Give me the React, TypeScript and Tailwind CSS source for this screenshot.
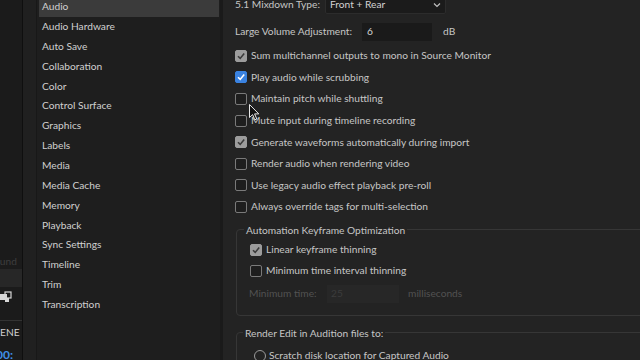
import React from "react";

const sidebarItems = [
  "Audio",
  "Audio Hardware",
  "Auto Save",
  "Collaboration",
  "Color",
  "Control Surface",
  "Graphics",
  "Labels",
  "Media",
  "Media Cache",
  "Memory",
  "Playback",
  "Sync Settings",
  "Timeline",
  "Trim",
  "Transcription",
];

type CheckState = "off" | "gray" | "blue";

function Check({ state }: { state: CheckState }) {
  if (state === "off") {
    return <div className="w-[12px] h-[12px] shrink-0 rounded-[2px] border border-[#7a7a7a] bg-[#1e1e1e]" />;
  }
  const bg = state === "blue" ? "bg-[#3a82e0] border-[#3a82e0]" : "bg-[#9c9c9c] border-[#9c9c9c]";
  const stroke = state === "blue" ? "#ffffff" : "#3a3a3a";
  return (
    <div className={`w-[12px] h-[12px] shrink-0 rounded-[2px] border flex items-center justify-center ${bg}`}>
      <svg width="10" height="10" viewBox="0 0 10 10">
        <path d="M2 5.2 L4.2 7.4 L8.2 2.6" fill="none" stroke={stroke} strokeWidth="1.6" />
      </svg>
    </div>
  );
}

function CheckRow({ state, label, h }: { state: CheckState; label: string; h: string }) {
  return (
    <div className={`flex items-center gap-[4px] shrink-0 ${h}`}>
      <Check state={state} />
      <span className="whitespace-nowrap">{label}</span>
    </div>
  );
}

export default function App() {
  return (
    <div
      className="w-[640px] h-[360px] overflow-hidden flex bg-[#232323] text-[#c6c6c6] text-[10.2px] relative"
      style={{ fontFamily: "Lato, 'Open Sans', sans-serif" }}
    >
      {/* left app strip */}
      <div className="w-[23px] shrink-0 bg-[#1b1b1b] border-r border-[#0f0f0f] flex flex-col [&>*]:shrink-0">
        <div className="h-[255px]" />
        <div className="h-[14px] flex items-center text-[#3e3e3e] whitespace-nowrap overflow-hidden -ml-[6px]">ound</div>
        <div className="h-[18px] bg-[#272727]" />
        <div className="h-[4px]" />
        <div className="h-[12px] flex items-center">
          <svg width="12" height="12" viewBox="0 0 12 12">
            <rect x="0" y="3" width="7" height="6" fill="#d8d8d8" />
            <rect x="5" y="1" width="6" height="6" fill="none" stroke="#d8d8d8" strokeWidth="1.2" />
            <rect x="5" y="7" width="4" height="4" fill="#d8d8d8" />
          </svg>
        </div>
        <div className="h-[17px]" />
        <div className="h-[1px] bg-[#333]" />
        <div className="h-[4px]" />
        <div className="h-[16px] flex items-center text-[#cfcfcf] whitespace-nowrap overflow-hidden">ENE :</div>
        <div className="h-[7px]" />
        <div className="h-[14px] flex items-center text-[#3f8fe6] text-[12px] font-bold whitespace-nowrap overflow-hidden -ml-[4px]">00:</div>
      </div>
      <div className="w-[14px] shrink-0 bg-[#202020] border-r border-[#181818]" />
      {/* sidebar */}
      <div className="w-[186px] shrink-0 bg-[#1e1e1e] border-r-[3px] border-[#1a1a1a] flex flex-col pl-[2px] pr-[1px]">
        <div className="-mt-[3px] flex flex-col [&>*]:shrink-0">
          {sidebarItems.map((it, i) => (
            <div
              key={it}
              className={`h-[19.85px] flex items-center pl-[3px] text-[10.2px] text-[#d0d0d0] whitespace-nowrap ${i === 0 ? "bg-[#3b3b3b]" : ""}`}
            >
              {it}
            </div>
          ))}
        </div>
      </div>
      {/* content */}
      <div className="flex-1 flex flex-col pl-[12px] relative [&>*]:shrink-0">
        <div className="-mt-[5px] h-[19px] flex items-center">
          <span className="w-[90px] whitespace-nowrap">5.1 Mixdown Type:</span>
          <div className="w-[121px] h-[19px] bg-[#1b1b1b] border border-[#2c2c2c] rounded-[2px] flex items-center justify-between pl-[4px] pr-[4px] text-[#d2d2d2]">
            <span>Front + Rear</span>
            <svg width="8" height="6" viewBox="0 0 8 6">
              <path d="M1 1.5 L4 4.5 L7 1.5" fill="none" stroke="#c0c0c0" strokeWidth="1.2" />
            </svg>
          </div>
        </div>
        <div className="h-[9px]" />
        <div className="h-[18px] flex items-center">
          <span className="w-[127px] whitespace-nowrap">Large Volume Adjustment:</span>
          <div className="w-[70px] h-[18px] bg-[#1a1a1a] flex items-center pl-[5px] text-[#d2d2d2]">6</div>
          <span className="ml-[11px]">dB</span>
        </div>
        <div className="h-[4px]" />
        <div className="flex flex-col">
          <CheckRow h="h-[21.6px]" state="gray" label="Sum multichannel outputs to mono in Source Monitor" />
          <CheckRow h="h-[21.6px]" state="blue" label="Play audio while scrubbing" />
          <CheckRow h="h-[21.6px]" state="off" label="Maintain pitch while shuttling" />
          <CheckRow h="h-[21.6px]" state="off" label="Mute input during timeline recording" />
          <CheckRow h="h-[21.6px]" state="gray" label="Generate waveforms automatically during import" />
          <CheckRow h="h-[21.6px]" state="off" label="Render audio when rendering video" />
          <CheckRow h="h-[21.6px]" state="off" label="Use legacy audio effect playback pre-roll" />
          <CheckRow h="h-[21.6px]" state="off" label="Always override tags for multi-selection" />
        </div>
        <div className="h-[5px]" />
        <fieldset className="border border-[#363636] rounded-[4px] ml-[1px] -mr-[40px] h-[93px] pl-[13px]">
          <legend className="px-[2px] -ml-[6px] leading-[14px] whitespace-nowrap">Automation Keyframe Optimization</legend>
          <CheckRow h="h-[21.6px] mt-[2px]" state="gray" label="Linear keyframe thinning" />
          <CheckRow h="h-[21.6px]" state="off" label="Minimum time interval thinning" />
          <div className="h-[24px] flex items-center text-[#525252] -ml-[1px]">
            <span className="w-[78px] whitespace-nowrap">Minimum time:</span>
            <div className="w-[72px] h-[18px] bg-[#272727] flex items-center pl-[4px] text-[#3c3c3c]">25</div>
            <span className="ml-[9px]">milliseconds</span>
          </div>
        </fieldset>
        <div className="h-[10px]" />
        <fieldset className="border border-[#363636] rounded-[4px] ml-[1px] -mr-[40px] h-[60px] pl-[17px]">
          <legend className="px-[2px] -ml-[11px] leading-[14px] whitespace-nowrap">Render Edit in Audition files to:</legend>
          <div className="h-[24px] mt-[4px] flex items-center gap-[3px]">
            <div className="w-[12px] h-[12px] rounded-full border border-[#9a9a9a]" />
            <span className="whitespace-nowrap">Scratch disk location for Captured Audio</span>
          </div>
        </fieldset>
        {/* mouse cursor */}
        <svg className="absolute left-[26px] top-[104px]" width="11" height="17" viewBox="0 0 11 17">
          <path d="M0.5 0.5 L0.5 13.5 L3.6 10.6 L5.8 15.8 L7.8 15 L5.6 9.9 L9.8 9.9 Z" fill="#111" stroke="#e8e8e8" strokeWidth="1" />
        </svg>
      </div>
    </div>
  );
}
